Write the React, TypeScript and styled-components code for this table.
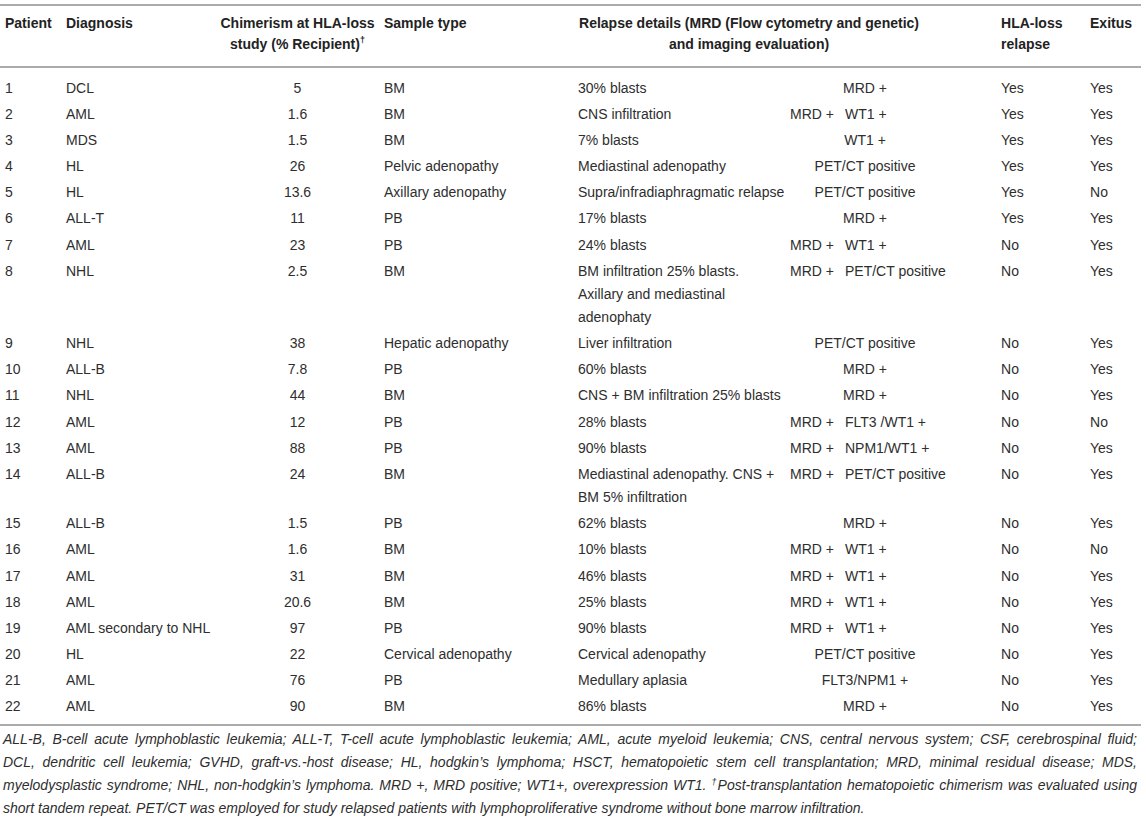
import { Fragment } from 'react';
import styled, { createGlobalStyle } from 'styled-components';

type Row = {
  id: number;
  diagnosis: string;
  chimerism: string;
  sample: string;
  relapse: string[];
  mrd?: string;
  marker: string;
  hlaLoss: string;
  exitus: string;
};

const ROWS: Row[] = [
  { id: 1, diagnosis: 'DCL', chimerism: '5', sample: 'BM', relapse: ['30% blasts'], marker: 'MRD +', hlaLoss: 'Yes', exitus: 'Yes' },
  { id: 2, diagnosis: 'AML', chimerism: '1.6', sample: 'BM', relapse: ['CNS infiltration'], mrd: 'MRD +', marker: 'WT1 +', hlaLoss: 'Yes', exitus: 'Yes' },
  { id: 3, diagnosis: 'MDS', chimerism: '1.5', sample: 'BM', relapse: ['7% blasts'], marker: 'WT1 +', hlaLoss: 'Yes', exitus: 'Yes' },
  { id: 4, diagnosis: 'HL', chimerism: '26', sample: 'Pelvic adenopathy', relapse: ['Mediastinal adenopathy'], marker: 'PET/CT positive', hlaLoss: 'Yes', exitus: 'Yes' },
  { id: 5, diagnosis: 'HL', chimerism: '13.6', sample: 'Axillary adenopathy', relapse: ['Supra/infradiaphragmatic relapse'], marker: 'PET/CT positive', hlaLoss: 'Yes', exitus: 'No' },
  { id: 6, diagnosis: 'ALL-T', chimerism: '11', sample: 'PB', relapse: ['17% blasts'], marker: 'MRD +', hlaLoss: 'Yes', exitus: 'Yes' },
  { id: 7, diagnosis: 'AML', chimerism: '23', sample: 'PB', relapse: ['24% blasts'], mrd: 'MRD +', marker: 'WT1 +', hlaLoss: 'No', exitus: 'Yes' },
  {
    id: 8,
    diagnosis: 'NHL',
    chimerism: '2.5',
    sample: 'BM',
    relapse: ['BM infiltration 25% blasts.', 'Axillary and mediastinal', 'adenophaty'],
    mrd: 'MRD +',
    marker: 'PET/CT positive',
    hlaLoss: 'No',
    exitus: 'Yes',
  },
  { id: 9, diagnosis: 'NHL', chimerism: '38', sample: 'Hepatic adenopathy', relapse: ['Liver infiltration'], marker: 'PET/CT positive', hlaLoss: 'No', exitus: 'Yes' },
  { id: 10, diagnosis: 'ALL-B', chimerism: '7.8', sample: 'PB', relapse: ['60% blasts'], marker: 'MRD +', hlaLoss: 'No', exitus: 'Yes' },
  { id: 11, diagnosis: 'NHL', chimerism: '44', sample: 'BM', relapse: ['CNS + BM infiltration 25% blasts'], marker: 'MRD +', hlaLoss: 'No', exitus: 'Yes' },
  { id: 12, diagnosis: 'AML', chimerism: '12', sample: 'PB', relapse: ['28% blasts'], mrd: 'MRD +', marker: 'FLT3 /WT1 +', hlaLoss: 'No', exitus: 'No' },
  { id: 13, diagnosis: 'AML', chimerism: '88', sample: 'PB', relapse: ['90% blasts'], mrd: 'MRD +', marker: 'NPM1/WT1 +', hlaLoss: 'No', exitus: 'Yes' },
  {
    id: 14,
    diagnosis: 'ALL-B',
    chimerism: '24',
    sample: 'BM',
    relapse: ['Mediastinal adenopathy. CNS +', 'BM 5% infiltration'],
    mrd: 'MRD +',
    marker: 'PET/CT positive',
    hlaLoss: 'No',
    exitus: 'Yes',
  },
  { id: 15, diagnosis: 'ALL-B', chimerism: '1.5', sample: 'PB', relapse: ['62% blasts'], marker: 'MRD +', hlaLoss: 'No', exitus: 'Yes' },
  { id: 16, diagnosis: 'AML', chimerism: '1.6', sample: 'BM', relapse: ['10% blasts'], mrd: 'MRD +', marker: 'WT1 +', hlaLoss: 'No', exitus: 'No' },
  { id: 17, diagnosis: 'AML', chimerism: '31', sample: 'BM', relapse: ['46% blasts'], mrd: 'MRD +', marker: 'WT1 +', hlaLoss: 'No', exitus: 'Yes' },
  { id: 18, diagnosis: 'AML', chimerism: '20.6', sample: 'BM', relapse: ['25% blasts'], mrd: 'MRD +', marker: 'WT1 +', hlaLoss: 'No', exitus: 'Yes' },
  { id: 19, diagnosis: 'AML secondary to NHL', chimerism: '97', sample: 'PB', relapse: ['90% blasts'], mrd: 'MRD +', marker: 'WT1 +', hlaLoss: 'No', exitus: 'Yes' },
  { id: 20, diagnosis: 'HL', chimerism: '22', sample: 'Cervical adenopathy', relapse: ['Cervical adenopathy'], marker: 'PET/CT positive', hlaLoss: 'No', exitus: 'Yes' },
  { id: 21, diagnosis: 'AML', chimerism: '76', sample: 'PB', relapse: ['Medullary aplasia'], marker: 'FLT3/NPM1 +', hlaLoss: 'No', exitus: 'Yes' },
  { id: 22, diagnosis: 'AML', chimerism: '90', sample: 'BM', relapse: ['86% blasts'], marker: 'MRD +', hlaLoss: 'No', exitus: 'Yes' },
];

// Column widths in px, summed to the width of the rules.
const COLUMNS = [61, 150, 168, 194, 212, 55, 156, 89, 56];

const GlobalStyle = createGlobalStyle`
  html, body {
    margin: 0;
    background: #ffffff;
  }

  body {
    font-family: "Liberation Sans", Arial, sans-serif;
    color: #2e2e2e;
  }
`;

const Page = styled.div`
  width: 1141px;
  padding-top: 4px;
`;

const Table = styled.table`
  width: 1141px;
  table-layout: fixed;
  border-collapse: collapse;
  border-top: 2px solid #ababab;
  border-bottom: 2px solid #ababab;
  font-size: 14px;
`;

const HeadCell = styled.th<{ $center?: boolean; $padRight?: number }>`
  padding: 7px ${(p) => p.$padRight ?? 5}px 11px 5px;
  border-bottom: 2px solid #ababab;
  font-weight: 700;
  line-height: 21px;
  text-align: ${(p) => (p.$center ? 'center' : 'left')};
  vertical-align: top;
  color: #222222;
  white-space: nowrap;

  sup {
    font-size: 9px;
    line-height: 0;
    vertical-align: 6px;
  }
`;

const BodyRow = styled.tr`
  &:first-child td {
    padding-top: 8.5px;
  }

  &:last-child td {
    padding-bottom: 5.5px;
  }
`;

const Cell = styled.td<{ $center?: boolean; $padRight?: number }>`
  padding: 1.6px ${(p) => p.$padRight ?? 5}px 1.6px 5px;
  line-height: 23px;
  text-align: ${(p) => (p.$center ? 'center' : 'left')};
  vertical-align: top;
  white-space: nowrap;

  &:last-child {
    padding-right: 0;
  }
`;

const Notes = styled.p`
  margin: 2px 0 0;
  padding: 0 4px 0 3px;
  font-size: 14px;
  font-style: italic;
  line-height: 23px;
  color: #2e2e2e;

  sup {
    font-size: 9px;
    line-height: 0;
    vertical-align: 5px;
  }
`;

// Each footnote line is stretched to the full width, as in the print layout.
const NoteLine = styled.span<{ $last?: boolean }>`
  display: block;
  text-align: ${(p) => (p.$last ? 'left' : 'justify')};
  text-align-last: ${(p) => (p.$last ? 'left' : 'justify')};
  white-space: nowrap;
`;

function App() {
  return (
    <Page>
      <GlobalStyle />
      <Table>
        <colgroup>
          {COLUMNS.map((width, index) => (
            <col key={index} style={{ width }} />
          ))}
        </colgroup>
        <thead>
          <tr>
            <HeadCell>Patient</HeadCell>
            <HeadCell>Diagnosis</HeadCell>
            <HeadCell $center $padRight={0}>
              Chimerism at HLA-loss
              <br />
              study (% Recipient)<sup>†</sup>
            </HeadCell>
            <HeadCell>Sample type</HeadCell>
            <HeadCell colSpan={3} $center $padRight={76}>
              Relapse details (MRD (Flow cytometry and genetic)
              <br />
              and imaging evaluation)
            </HeadCell>
            <HeadCell>
              HLA-loss
              <br />
              relapse
            </HeadCell>
            <HeadCell>Exitus</HeadCell>
          </tr>
        </thead>
        <tbody>
          {ROWS.map((row) => (
            <BodyRow key={row.id}>
              <Cell>{row.id}</Cell>
              <Cell>{row.diagnosis}</Cell>
              <Cell $center $padRight={0}>
                {row.chimerism}
              </Cell>
              <Cell>{row.sample}</Cell>
              <Cell>
                {row.relapse.map((line, index) => (
                  <Fragment key={index}>
                    {index > 0 && <br />}
                    {line}
                  </Fragment>
                ))}
              </Cell>
              {row.mrd ? (
                <>
                  <Cell>{row.mrd}</Cell>
                  <Cell>{row.marker}</Cell>
                </>
              ) : (
                <Cell colSpan={2} $center $padRight={56}>
                  {row.marker}
                </Cell>
              )}
              <Cell>{row.hlaLoss}</Cell>
              <Cell>{row.exitus}</Cell>
            </BodyRow>
          ))}
        </tbody>
      </Table>
      <Notes>
        <NoteLine>
          ALL-B, B-cell acute lymphoblastic leukemia; ALL-T, T-cell acute lymphoblastic leukemia; AML, acute
          myeloid leukemia; CNS, central nervous system; CSF, cerebrospinal fluid;
        </NoteLine>
        <NoteLine>
          DCL, dendritic cell leukemia; GVHD, graft-vs.-host disease; HL, hodgkin’s lymphoma; HSCT, hematopoietic
          stem cell transplantation; MRD, minimal residual disease; MDS,
        </NoteLine>
        <NoteLine>
          myelodysplastic syndrome; NHL, non-hodgkin’s lymphoma. MRD +, MRD positive; WT1+, overexpression WT1.{' '}
          <sup>†</sup>Post-transplantation hematopoietic chimerism was evaluated using
        </NoteLine>
        <NoteLine $last>
          short tandem repeat. PET/CT was employed for study relapsed patients with lymphoproliferative syndrome
          without bone marrow infiltration.
        </NoteLine>
      </Notes>
    </Page>
  );
}

export default App;
